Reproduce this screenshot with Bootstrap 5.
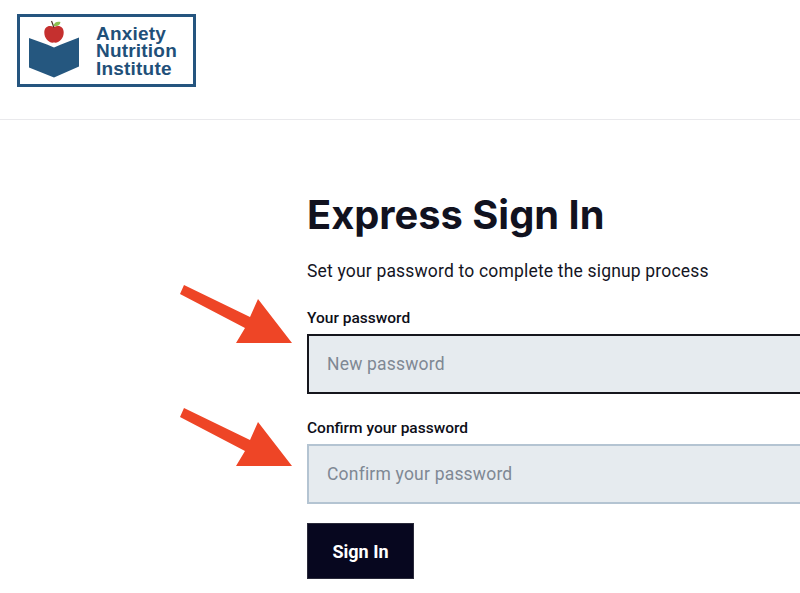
<!DOCTYPE html>
<html lang="en">
<head>
<meta charset="utf-8">
<title>Express Sign In</title>
<link href="https://cdn.jsdelivr.net/npm/bootstrap@5.3.0/dist/css/bootstrap.min.css" rel="stylesheet">
<style>
html,body{overflow:hidden;height:593px;}
body{background:#fff;font-family:Roboto,sans-serif;color:#10121f;}
.site-head{height:120px;border-bottom:1px solid #e9e9ec;padding:14px 0 0 17px;}
.logo-box{width:179px;height:73px;border:3px solid #25557f;gap:15px;padding-left:7px;}
.logo-text{font-family:"Liberation Sans",Arial,sans-serif;font-weight:700;font-size:19px;letter-spacing:.2px;line-height:17.5px;color:#1f5079;padding-top:1px;}
.sign-main{position:relative;padding:72px 0 0 307px;width:900px;}
.sign-title{font-family:Inter,sans-serif;font-weight:700;font-size:39.800px;line-height:46px;color:#11121f;margin:0 0 21px;}
.sign-intro{font-size:17.500px;line-height:24px;letter-spacing:.18px;color:#14151f;margin:0 0 26px;}
.field-label{font-weight:500;font-size:15.500px;line-height:18px;color:#0d0e18;margin:0 0 7px;display:block;}
.field-input.form-control{height:60px;width:593px;border-radius:0;background:#e6ebef;border:2px solid #b4c4d2;padding:0 18px;font-size:17.500px;letter-spacing:.2px;color:#222;}
.field-input.form-control::placeholder{color:#7f8894;opacity:1;}
.field-input.is-active{border-color:#15161d;}
.field-gap{margin-bottom:25px;}
.sign-btn.btn{background:#07071f;border:1px solid #2a2a3a;border-radius:0;color:#fff;font-weight:700;font-size:18px;width:107px;height:56px;margin-top:-6px;padding:0;}
.arrow-mark{position:absolute;left:170px;width:130px;height:70px;}
</style>
</head>
<body>
<header class="site-head">
  <div class="logo-box d-flex align-items-center">
    <svg width="54" height="62" viewBox="27 19.500 54 62" aria-hidden="true">
      <path d="M29 37.500 L47 44 L54 47 L61 44 L79 37 V66 L54 77 L29 67 Z" fill="#25577f"/>
      <path d="M54 26.500 C49 24 44.300 26 44.300 32 C44.300 38 49 43 54 42 C59 43 63.700 38 63.700 32 C63.700 26 59 24 54 26.500Z" fill="#c5302f"/>
      <path d="M54 27 L51.500 20.500" stroke="#4a3020" stroke-width="1.200" fill="none"/>
      <path d="M53.500 25.500 C54 22 57 20.500 60.500 21.500 C60 25 57 26 53.500 25.500Z" fill="#8cc152"/>
    </svg>
    <div class="logo-text">Anxiety<br>Nutrition<br>Institute</div>
  </div>
</header>
<main class="sign-main">
  <h1 class="sign-title">Express Sign In</h1>
  <p class="sign-intro">Set your password to complete the signup process</p>
  <form>
    <div class="field-gap">
      <label class="field-label" for="pw1">Your password</label>
      <input id="pw1" class="form-control field-input is-active" type="password" placeholder="New password">
    </div>
    <div class="field-gap">
      <label class="field-label" for="pw2">Confirm your password</label>
      <input id="pw2" class="form-control field-input" type="password" placeholder="Confirm your password">
    </div>
    <button type="button" class="btn sign-btn">Sign In</button>
  </form>
  <svg class="arrow-mark" style="top:160px" viewBox="170 280 130 70" aria-hidden="true"><path d="M184 285 L250 317 L258 299 L292 343 L236 343 L245 328 L180 294 Z" fill="#ee4526"/></svg>
  <svg class="arrow-mark" style="top:283px" viewBox="170 403 130 70" aria-hidden="true"><path d="M184 408 L250 440 L258 422 L292 466 L236 466 L245 451 L180 417 Z" fill="#ee4526"/></svg>
</main>
<script src="https://cdn.jsdelivr.net/npm/bootstrap@5.3.0/dist/js/bootstrap.bundle.min.js"></script>
</body>
</html>
